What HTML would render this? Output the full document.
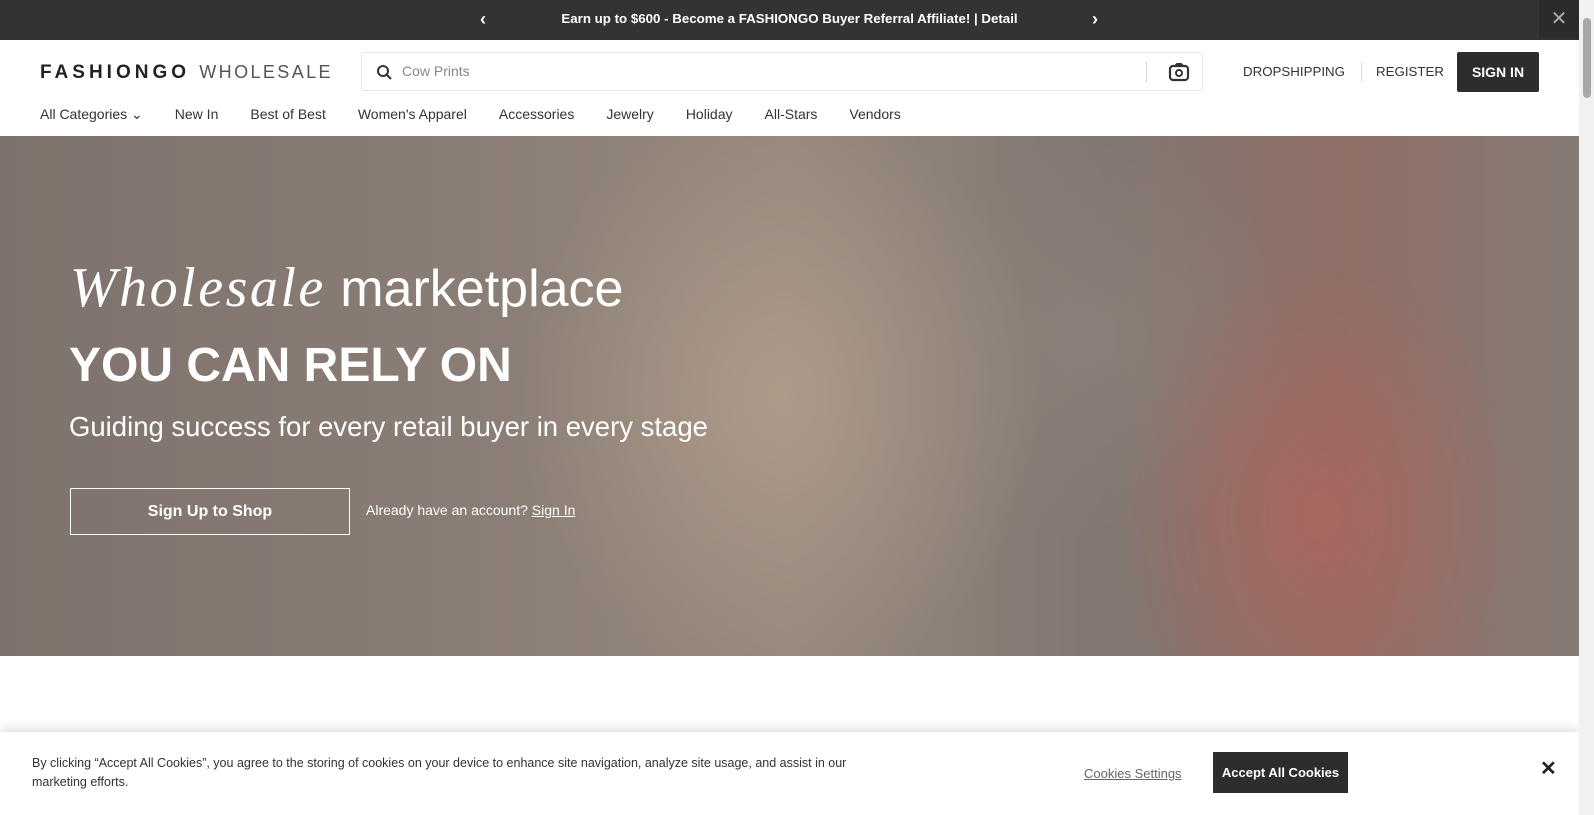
<!DOCTYPE html>
<html><head><meta charset="utf-8"><style>
*{box-sizing:border-box;margin:0;padding:0}
body{width:1594px;height:815px;overflow:hidden;font-family:"Liberation Sans",sans-serif;background:#fff;position:relative}
.top{position:absolute;left:0;top:0;width:1579px;height:40px;background:#333;color:#fff;font-weight:bold;font-size:13.3px;text-align:center;line-height:38px}
.top .a{position:absolute;top:0;font-size:18px}
.cls{position:absolute;right:0;top:0;width:40px;height:38px;background:#2b2b2b;color:#aaa;font-size:20px;font-weight:normal;text-align:center;line-height:38px}
.sb{position:absolute;right:0;top:0;width:15px;height:815px;background:#f1f1f1}
.sb i{position:absolute;left:4px;top:18px;width:8px;height:80px;background:#a8a8a8;border-radius:4px}
.logo{position:absolute;left:40px;top:62px;font-size:19px;letter-spacing:4px;color:#222}
.logo b{font-weight:bold}.logo span{font-weight:normal;color:#555;letter-spacing:2.4px;font-size:18px}
.search{position:absolute;left:361px;top:52px;width:842px;height:39px;border:1px solid #e6e6e6;border-radius:3px;font-size:14px;color:#888;line-height:37px;padding-left:40px}
.nav{position:absolute;top:106px;left:40px;font-size:14px;color:#333}
.nav span{margin-right:32px}
.rlinks{position:absolute;top:64px;font-size:13.3px;color:#333}
.btn{position:absolute;left:1457px;top:52px;width:82px;height:40px;background:#2d2d2d;color:#fff;font-weight:bold;font-size:14px;text-align:center;line-height:40px;border-radius:2px}
.hero{position:absolute;left:0;top:136px;width:1579px;height:520px;background:
radial-gradient(ellipse 200px 260px at 1320px 380px,rgba(200,110,100,.85),transparent),
radial-gradient(ellipse 260px 300px at 780px 260px,rgba(215,190,165,.7),transparent),
radial-gradient(ellipse 200px 200px at 1100px 200px,rgba(160,150,140,.6),transparent),
linear-gradient(90deg,#8a7e78 0%,#9a8d84 30%,#a89a8c 50%,#8f8580 70%,#a07a70 85%,#958a84 100%)}
.hero .ov{position:absolute;inset:0;background:rgba(90,80,75,.25)}
.h1{position:absolute;left:70px;top:120px;color:#fff;font-size:52px}
.h1 i{font-family:"Liberation Serif",serif;letter-spacing:2.5px;font-size:56px}
.h2{position:absolute;left:69px;top:202px;color:#fff;font-size:48px;font-weight:bold}
.h3{position:absolute;left:69px;top:275px;color:#fff;font-size:27.5px}
.hb{position:absolute;left:70px;top:352px;width:280px;height:47px;border:1px solid #fff;color:#fff;font-weight:bold;font-size:16px;text-align:center;line-height:45px}
.ha{position:absolute;left:366px;top:366px;color:#fff;font-size:14px}
.cookie{position:absolute;left:0;top:732px;width:1579px;height:83px;background:#fff;box-shadow:0 -4px 10px rgba(0,0,0,.12)}
.ct{position:absolute;left:32px;top:22px;font-size:12.5px;line-height:19px;color:#333;width:840px}
.cs{position:absolute;left:1084px;top:34px;font-size:13px;color:#666;text-decoration:underline}
.ca{position:absolute;left:1213px;top:20px;width:135px;height:41px;background:#2d2d2d;color:#fff;font-weight:bold;font-size:13px;text-align:center;line-height:41px}
.cx{position:absolute;left:1540px;top:24px;font-size:20px;color:#222;font-weight:bold}
</style></head><body>
<div class="top"><span class="a" style="left:480px">‹</span>Earn up to $600 - Become a FASHIONGO Buyer Referral Affiliate! | Detail<span class="a" style="left:1092px">›</span><div class="cls">✕</div></div>
<div class="logo"><b>FASHIONGO</b> <span>WHOLESALE</span></div>
<div class="search"><svg style="position:absolute;left:14px;top:11px" width="16" height="16" viewBox="0 0 16 16"><circle cx="7" cy="7" r="5" fill="none" stroke="#333" stroke-width="2"/><path d="M11 11l4 4" stroke="#333" stroke-width="2"/></svg>Cow Prints
<div style="position:absolute;left:784px;top:8px;width:1px;height:22px;background:#ddd"></div>
<svg style="position:absolute;left:806px;top:9px" width="22" height="20" viewBox="0 0 22 20"><rect x="2" y="4" width="18" height="14" rx="3" fill="none" stroke="#333" stroke-width="2.2"/><path d="M7 4l2-2h4l2 2" fill="none" stroke="#333" stroke-width="2"/><circle cx="11" cy="11" r="3" fill="none" stroke="#333" stroke-width="2"/></svg></div>
<div class="rlinks" style="left:1243px">DROPSHIPPING</div>
<div style="position:absolute;left:1361px;top:62px;width:1px;height:20px;background:#ddd"></div>
<div class="rlinks" style="left:1376px">REGISTER</div>
<div class="btn">SIGN IN</div>
<div class="nav"><span>All Categories ⌄</span><span>New In</span><span>Best of Best</span><span>Women's Apparel</span><span>Accessories</span><span>Jewelry</span><span>Holiday</span><span>All-Stars</span><span>Vendors</span></div>
<div class="hero"><div class="ov"></div>
<div class="h1"><i>Wholesale</i> marketplace</div>
<div class="h2">YOU CAN RELY ON</div>
<div class="h3">Guiding success for every retail buyer in every stage</div>
<div class="hb">Sign Up to Shop</div>
<div class="ha">Already have an account? <u>Sign In</u></div></div>
<div class="cookie"><div class="ct">By clicking “Accept All Cookies”, you agree to the storing of cookies on your device to enhance site navigation, analyze site usage, and assist in our marketing efforts.</div>
<div class="cs">Cookies Settings</div><div class="ca">Accept All Cookies</div><div class="cx">✕</div></div>
<div class="sb"><i></i></div>
</body></html>
